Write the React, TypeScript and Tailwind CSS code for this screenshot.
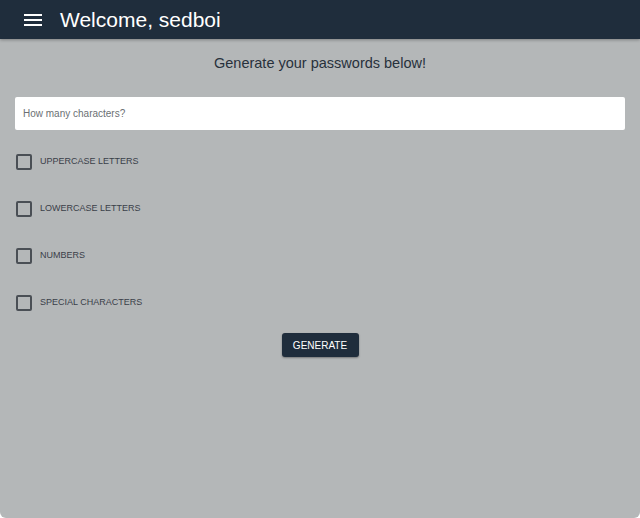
import { useState } from "react"

const options = ["Uppercase letters", "Lowercase letters", "Numbers", "Special characters"]

export default function App() {
  const [checked, setChecked] = useState<boolean[]>([false, false, false, false])

  return (
    <div className="min-h-[518px] h-[518px] bg-[#b4b7b8] flex flex-col font-['Liberation_Sans',Arial,sans-serif] overflow-hidden rounded-b-[6px]">
      {/* Top bar */}
      <header className="h-[39px] bg-[#1f2d3c] flex items-center shadow-[0_1px_3px_rgba(0,0,0,0.3)] shrink-0">
        <button className="ml-[24px] w-[18px] flex flex-col gap-[3px]">
          <span className="block h-[2px] bg-white" />
          <span className="block h-[2px] bg-white" />
          <span className="block h-[2px] bg-white" />
        </button>
        <h1 className="ml-[18px] text-white text-[21px] leading-none pb-[1px]">Welcome, sedboi</h1>
      </header>

      <main className="flex flex-col px-[15px]">
        <h2 className="text-center text-[#28313c] text-[14.5px] mt-[15px] leading-[18px]">
          Generate your passwords below!
        </h2>

        <input
          className="mt-[25px] h-[33px] bg-white rounded-[2px] px-[8px] text-[10px] text-[#333] placeholder:text-[#6b6f73] outline-none"
          placeholder="How many characters?"
        />

        <div className="flex flex-col mt-[24px] gap-[31px]">
          {options.map((opt, i) => (
            <label key={opt} className="flex items-center gap-[8px] h-[16px] cursor-pointer">
              <span
                onClick={() => setChecked(c => c.map((v, j) => (j === i ? !v : v)))}
                className={`w-[16px] h-[16px] rounded-[2px] border-2 border-[#4a4f55] ml-[1px] ${checked[i] ? "bg-[#1f2d3c]" : ""}`}
              />
              <span className="text-[9px] uppercase text-[#3a4049]">{opt}</span>
            </label>
          ))}
        </div>

        <div className="flex justify-center mt-[22px]">
          <button className="w-[77px] h-[24px] bg-[#1f2d3c] text-white text-[10px] rounded-[3px] shadow-[0_1px_2px_rgba(0,0,0,0.35)]">
            GENERATE
          </button>
        </div>
      </main>
    </div>
  )
}
